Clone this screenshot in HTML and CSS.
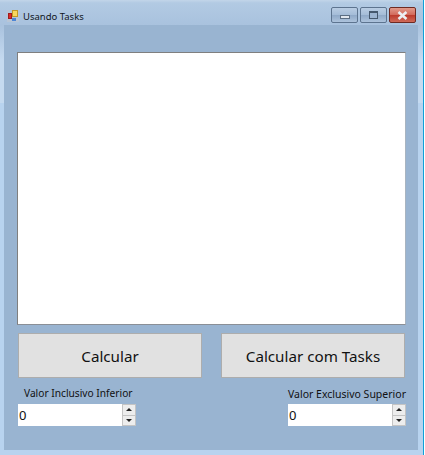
FILE: index.html

```html
<!DOCTYPE html>
<html lang="en">
<head>
<meta charset="UTF-8">
<meta name="viewport" content="width=device-width, initial-scale=1.0">
<title>Usando Tasks</title>
<link rel="stylesheet" href="styles.css">
</head>
<body>
<div class="window">
    <div class="titlebar">
        <svg class="app-icon" width="12" height="12" viewBox="0 0 12 12">
            <rect width="12" height="12" fill="#b9c6d6"/>
            <rect x="1.5" y="3.5" width="3" height="5" fill="#dc2a2a" stroke="#a01c1c"/>
            <rect x="5.5" y="0.5" width="5" height="6" fill="#f8d860" stroke="#c09a28"/>
            <rect x="5" y="8" width="4" height="3" fill="#4d86d6"/>
        </svg>
        <span class="title">Usando Tasks</span>
        <div class="caption-btns">
            <div class="cap-btn"><span class="min-glyph"></span></div>
            <div class="cap-btn"><span class="max-glyph"></span></div>
            <div class="cap-btn close">
                <svg width="13" height="11" viewBox="0 0 13 11"><path d="M2.5 2 L10.5 9 M10.5 2 L2.5 9" stroke="#eceff2" stroke-width="2.6"/></svg>
            </div>
        </div>
    </div>
    <div class="client">
        <div class="output"></div>
        <div class="btn-row">
            <button class="btn">Calcular</button>
            <button class="btn">Calcular com Tasks</button>
        </div>
        <div class="fields">
            <div class="field">
                <label class="lbl lbl-left">Valor Inclusivo Inferior</label>
                <div class="spin">
                    <span class="spin-val">0</span>
                    <div class="spin-btns">
                        <div class="arrow"><i class="up"></i></div>
                        <div class="arrow"><i class="down"></i></div>
                    </div>
                </div>
            </div>
            <div class="field">
                <label class="lbl lbl-right">Valor Exclusivo Superior</label>
                <div class="spin">
                    <span class="spin-val">0</span>
                    <div class="spin-btns">
                        <div class="arrow"><i class="up"></i></div>
                        <div class="arrow"><i class="down"></i></div>
                    </div>
                </div>
            </div>
        </div>
    </div>
</div>
</body>
</html>
```

FILE: styles.css

```css
body {
    margin: 0;
    padding: 0;
    background-color: #fff;
    font-family: "Noto Sans", "Open Sans", sans-serif;
    color: #111;
}

.window {
    width: 424px;
    height: 455px;
    box-sizing: border-box;
    padding: 0 5px 5px 4px;
    background: linear-gradient(to bottom, #c2d5e9 0, #b2cae3 3px, #a9c2de 25px, #c5daf0 60px, #c5daf0 103px, #b8d3ef 103px, #b8d3ef 100%);
    border-right: 1px solid #10a0d8;
    display: flex;
    flex-direction: column;
}

.titlebar {
    height: 25px;
    box-sizing: border-box;
    padding-top: 7px;
    display: flex;
    align-items: center;
    flex-shrink: 0;
}

.app-icon {
    margin-left: 3px;
}

.title {
    margin-left: 4px;
    font-size: 9.5px;
    color: #10151c;
}

.caption-btns {
    margin-left: auto;
    margin-right: 2px;
    align-self: flex-start;
    display: flex;
    gap: 2px;
}

.cap-btn {
    width: 27px;
    height: 16px;
    box-sizing: border-box;
    border: 1px solid #5d748f;
    border-radius: 2px;
    background: linear-gradient(to bottom, #b9cde3 0, #a4bcd8 50%, #8fa9c8 51%, #adc3dc 100%);
    display: flex;
    align-items: center;
    justify-content: center;
}

.cap-btn.close {
    border-color: #6e2a22;
    background: linear-gradient(to bottom, #e19a8b 0, #d2695a 50%, #bc3a2c 51%, #cf6a58 100%);
}

.min-glyph {
    width: 10px;
    height: 4px;
    margin-top: 3px;
    background-color: #dfe6ee;
    border: 1px solid #5a6d83;
    box-sizing: border-box;
}

.max-glyph {
    width: 9px;
    height: 8px;
    box-sizing: border-box;
    border: 1px solid #45586e;
    border-top-width: 2px;
    background-color: #9db5d2;
}

.client {
    flex: 1;
    background-color: #99b4d1;
    padding: 27px 12px 0 13px;
    display: flex;
    flex-direction: column;
}

.output {
    height: 271px;
    background-color: #fff;
    border: 1px solid #7f7f7f;
    border-right-color: #a8b4c0;
    border-bottom-color: #8a8f96;
}

.btn-row {
    margin-top: 8px;
    padding: 0 1px;
    display: flex;
    justify-content: space-between;
}

.btn {
    width: 184px;
    height: 45px;
    box-sizing: border-box;
    background-color: #e1e1e1;
    border: 1px solid #adadad;
    font-family: inherit;
    font-size: 15.2px;
    color: #111;
    padding: 0;
}

.fields {
    margin-top: 6px;
    padding: 0 0 0 1px;
    display: flex;
    justify-content: space-between;
}

.field {
    width: 118px;
    display: flex;
    flex-direction: column;
}

.lbl {
    font-size: 10.2px;
    line-height: 16px;
    height: 20px;
    white-space: nowrap;
}

.lbl-left {
    margin-left: 6px;
    padding-top: 1px;
    height: 19px;
}

.lbl-right {
    font-size: 10.5px;
    align-self: flex-end;
    padding-top: 2px;
    height: 18px;
}

.spin {
    height: 22px;
    width: 118px;
    box-sizing: border-box;
    background-color: #fff;
    display: flex;
    justify-content: space-between;
    align-items: center;
}

.spin-val {
    font-size: 13px;
    margin-left: 1px;
}

.spin-btns {
    width: 14px;
    height: 22px;
    box-sizing: border-box;
    border: 1px solid #c4c4c4;
    display: flex;
    flex-direction: column;
    gap: 1px;
    background-color: #c4c4c4;
}

.arrow {
    flex: 1;
    background-color: #ededed;
    display: flex;
    align-items: center;
    justify-content: center;
}

.up {
    border-left: 3px solid transparent;
    border-right: 3px solid transparent;
    border-bottom: 3px solid #222;
}

.down {
    border-left: 3px solid transparent;
    border-right: 3px solid transparent;
    border-top: 3px solid #222;
}
```
